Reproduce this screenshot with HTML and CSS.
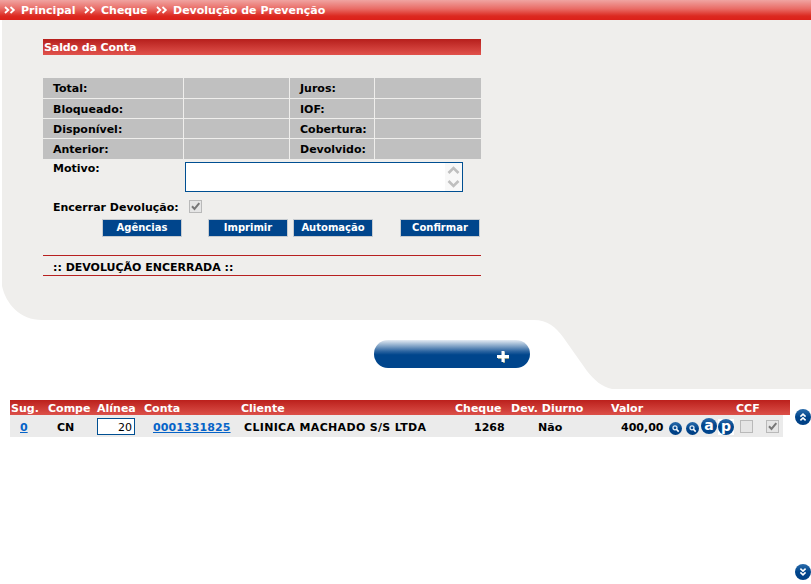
FILE: index.html
```html
<!DOCTYPE html>
<html lang="pt-BR">
<head>
<meta charset="utf-8">
<title>Devolução de Prevenção</title>
<link rel="stylesheet" href="styles.css">
</head>
<body>
<svg class="backdrop" width="811" height="584" viewBox="0 0 811 584"><path fill="#efeeec" d="M2 20H811V389H612C602 387 594 380 587 371L563 337C556 327 547 320 534 320H42C20 320 6 304 2 286Z"/></svg>
<svg class="defs" width="0" height="0"><defs>
<linearGradient id="orb" x2="0" y2="1"><stop stop-color="#2b6cab"/><stop offset=".5" stop-color="#00458c"/><stop offset="1" stop-color="#003f83"/></linearGradient>
<symbol id="check" viewBox="0 0 13 13"><path d="M3 6.3 5.5 9 10.3 3.2" fill="none" stroke="#777" stroke-width="2"/></symbol>
<symbol id="crumb" viewBox="0 0 12 8"><path d="m1 1 3.3 3L1 7M6.5 1l3.3 3-3.3 3" fill="none" stroke="#fff" stroke-width="1.8"/></symbol>
<symbol id="search" viewBox="0 0 13 13"><circle cx="6.5" cy="6.5" r="6.5" fill="url(#orb)"/><circle cx="6" cy="5.8" r="2" fill="none" stroke="#dce9f5" stroke-width="1.3"/><path d="m7.4 7.2 2.3 2.4" stroke="#fff" stroke-width="1.6"/></symbol>
<symbol id="up" viewBox="0 0 16 16"><circle cx="8" cy="8" r="8" fill="url(#orb)"/><path d="m5.4 7.6 2.6-2.5 2.6 2.5M5.4 11.4 8 8.9l2.6 2.5" fill="none" stroke="#fff" stroke-width="1.6"/></symbol>
<symbol id="down" viewBox="0 0 16 16"><circle cx="8" cy="8" r="8" fill="url(#orb)"/><path d="M5.4 4.6 8 7.1l2.6-2.5M5.4 8.4 8 10.9l2.6-2.5" fill="none" stroke="#fff" stroke-width="1.6"/></symbol>
</defs></svg>
<nav class="crumbs"><svg class="arrow"><use href="#crumb"/></svg><span class="c1">Principal</span><svg class="arrow"><use href="#crumb"/></svg><span class="c2">Cheque</span><svg class="arrow"><use href="#crumb"/></svg><span>Devolução de Prevenção</span></nav>
<main class="account">
  <h1>Saldo da Conta</h1>
  <div class="balances">
    <b>Total:</b><i></i><b>Juros:</b><i></i>
    <b>Bloqueado:</b><i></i><b>IOF:</b><i></i>
    <b>Disponível:</b><i></i><b>Cobertura:</b><i></i>
    <b>Anterior:</b><i></i><b>Devolvido:</b><i></i>
  </div>
  <div class="reason"><span>Motivo:</span><div class="memo"><div class="scroll"><svg width="17" height="28" viewBox="0 0 17 28"><path d="m3.5 10 5-5 5 5M3.5 18l5 5 5-5" fill="none" stroke="#bfbfbf" stroke-width="2.6"/></svg></div></div></div>
  <div class="closing"><span>Encerrar Devolução:</span><div class="box"><svg><use href="#check"/></svg></div></div>
  <div class="actions"><button>Agências</button><button>Imprimir</button><button>Automação</button><button>Confirmar</button></div>
  <p class="status">:: DEVOLUÇÃO ENCERRADA ::</p>
</main>
<div class="pill"><svg width="12" height="12" viewBox="0 0 12 12"><path d="M7 1v11M1 7h11" stroke="#9aa78f" stroke-width="2"/><path d="M6 0v11M0 5.5h12" stroke="#fff" stroke-width="3"/></svg></div>
<section class="results">
  <div class="list">
    <div class="head row"><span>Sug.</span><span>Compe</span><span>Alínea</span><span>Conta</span><span>Cliente</span><span>Cheque</span><span>Dev. Diurno</span><span>Valor</span><span>CCF</span></div>
    <div class="data row"><a>0</a><span>CN</span><div class="entry">20</div><a class="acct">0001331825</a><span class="client">CLINICA MACHADO S/S LTDA</span><span>1268</span><span>Não</span><span>400,00</span>
      <div class="tools"><svg class="lens"><use href="#search"/></svg><svg class="lens"><use href="#search"/></svg><span class="orb">a</span><span class="plate"><span class="orb">p</span></span></div>
      <div class="box"></div><div class="box"><svg><use href="#check"/></svg></div></div>
  </div>
  <div class="jumps"><svg class="jump"><use href="#up"/></svg><svg class="jump"><use href="#down"/></svg></div>
</section>
</body>
</html>
```
FILE: styles.css
```css
* { box-sizing: border-box; }
body { margin: 0; width: 811px; height: 584px; overflow: hidden; background: #fff; color: #000; font: bold 11px/14px Verdana, "DejaVu Sans", sans-serif; }
svg { display: block; }
.backdrop { position: absolute; left: 0; top: 0; z-index: -1; }
.defs { position: absolute; }
.crumbs { display: flex; height: 20px; padding: 4px 0 0 4px; color: #fff; background: linear-gradient(#f0a4a1, #e96a64 45%, #dc2920 80%, #dc2019); white-space: nowrap; }
.arrow { width: 12px; height: 8px; margin: 2px 5px 0 0; }
.c1 { width: 63px; }
.c2 { width: 55px; }
.account { width: 438px; margin: 19px 0 0 43px; }
h1 { height: 16px; margin: 0 0 23px; padding: 2px 1px 0; font: inherit; letter-spacing: -.1px; color: #fff; background: linear-gradient(#b61f1c, #e1524c); }
.balances { display: grid; grid-template: 20px 19px 19px 20px / 140px 105px 84px 106px; gap: 1px; background: #efeeec; }
.balances > * { background: #c0c0c0; padding: 4px 10px 0; }
.reason { display: flex; height: 33px; padding: 3px 0 0 10px; }
.reason span { width: 132px; }
.memo { width: 278px; height: 30px; border: 1px solid #004f92; background: #fff; display: flex; justify-content: flex-end; }
.scroll { width: 17px; background: #f8f8f8; }
.closing { display: flex; height: 27px; padding: 8px 0 0 10px; }
.closing span { width: 136px; padding-top: 1px; }
.box { width: 13px; height: 13px; border: 1px solid #b9b9b9; background: #e5e5e5; }
.box svg { width: 13px; height: 13px; margin: -1px; }
.actions { display: flex; margin-left: 59px; }
button { flex: none; width: 80px; height: 18px; padding: 0 0 1px; border: 1px solid #c6cbd0; background: #00458c; color: #fff; font: bold 10px/14px Verdana, "DejaVu Sans", sans-serif; margin-right: 5px; }
button:first-child { margin-right: 26px; }
button:nth-child(3) { margin-right: 27px; }
button:last-child { margin-right: 0; }
.status { height: 21px; margin: 18px 0 0; padding: 5px 10px 0; border: solid #b72020; border-width: 1px 0; }
.pill { width: 156px; height: 28px; margin: 64px 0 0 374px; padding: 11px 0 0 123px; border-radius: 14px; background: linear-gradient(#e4ebf3, #89a9ca 20%, #2d65a1 40%, #00458c 53%); }
.results { display: flex; margin: 32px 0 0 10px; }
.list { width: 780px; }
.row { display: grid; white-space: nowrap; }
.head { height: 15px; padding-left: 1px; padding-top: 2px; grid-template-columns: 37px 49px 47px 97px 214px 56px 100px 125px 1fr; color: #fff; background: linear-gradient(#bb201c, #dc5049); }
.data { width: 773px; height: 22px; padding-left: 10px; grid-template-columns: 37px 40px 56px 91px 230px 64px 83px 48px 71px 26px 13px; background: #ebebeb; padding-top: 6px; }
.data a { color: #0563c8; text-decoration: underline; }
.data .box { margin-top: -1px; }
.acct { letter-spacing: .1px; }
.client { letter-spacing: .33px; }
.entry { width: 38px; height: 17px; margin-top: -3px; border: 1px solid #004f92; background: #fff; padding: 2px 2px 0; text-align: right; font-weight: normal; }
.tools { display: flex; }
.lens { width: 13px; height: 13px; margin: 1px 4px 0 0; }
.lens + .lens { margin-right: 2px; }
.plate { width: 16px; height: 16px; margin-top: -2px; background: #fff; }
.orb { display: block; width: 16px; height: 16px; margin: -3px 1px 0 0; border-radius: 50%; background: linear-gradient(#2b6cab, #00458c 45%); color: #fff; font: bold 14px/14px "DejaVu Sans", sans-serif; text-align: center; }
.plate .orb { margin: 0; }
.jumps { display: flex; flex-direction: column; gap: 139px; margin: 9px 0 0 5px; }
.jump { width: 16px; height: 16px; }
```
